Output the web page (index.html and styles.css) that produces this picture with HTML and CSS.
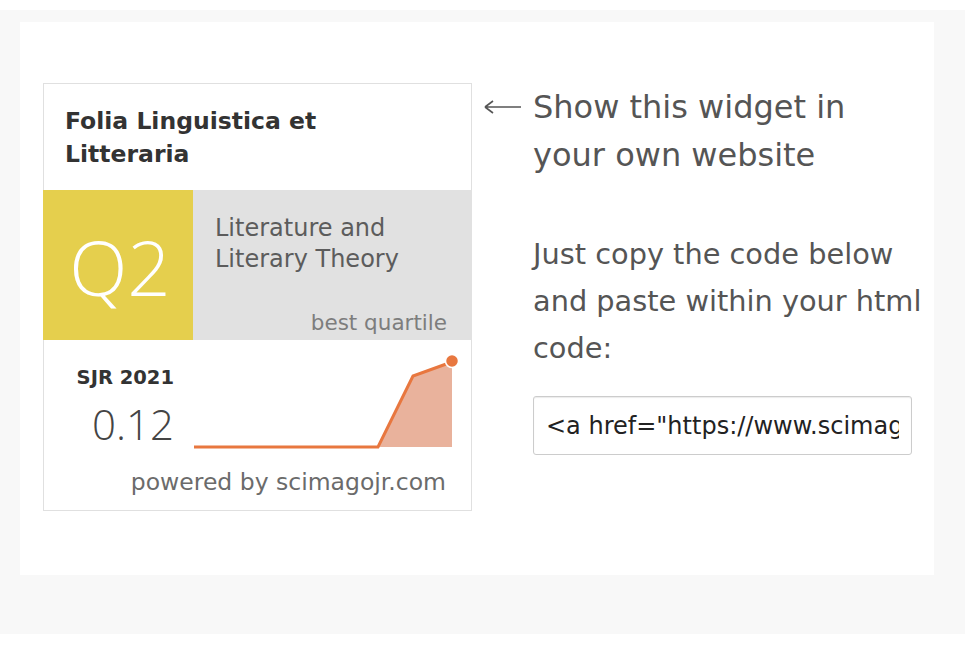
FILE: index.html
```html
<!DOCTYPE html>
<html lang="en">
<head>
  <meta charset="UTF-8">
  <title>SJR Widget</title>
  <link rel="stylesheet" href="styles.css">
</head>
<body>
  <div class="band">
    <div class="panel">
      <!-- the widget -->
      <div class="widget">
        <div class="widget-title">Folia Linguistica et Litteraria</div>
        <div class="quartile">
          <div class="q-box">Q2</div>
          <div class="q-info">
            <div class="q-cat">Literature and Literary Theory</div>
            <div class="q-note">best quartile</div>
          </div>
        </div>
        <div class="sjr">
          <div class="sjr-row">
            <div class="sjr-value">
              <div class="sjr-label">SJR 2021</div>
              <div class="sjr-num">0.12</div>
            </div>
            <svg class="sjr-chart" width="270" height="100" viewBox="0 0 270 100">
              <polygon points="184,97 219,26 255,13 258,11 258,97" fill="#e9b29c"/>
              <polyline points="0,97 184,97 219,26 255,13" fill="none" stroke="#e8773f" stroke-width="3"/>
              <circle cx="258" cy="11" r="6.5" fill="#e8773f" stroke="#fff" stroke-width="1.5"/>
            </svg>
          </div>
          <div class="powered">powered by scimagojr.com</div>
        </div>
      </div>

      <!-- instructions -->
      <div class="info">
        <div class="info-head">
          <svg class="arrow" width="49" height="48" viewBox="0 0 49 48">
            <path d="M1 24 H37 M1 24 L9 18 M1 24 L9 30" fill="none" stroke="#555" stroke-width="1.6"/>
          </svg>
          <h2>Show this widget in your own website</h2>
        </div>
        <p>Just copy the code below and paste within your html code:</p>
        <input class="code" type="text" value='&lt;a href="https://www.scimagojr.com/journalsearch.php?q=21100863116&amp;tip=sid&amp;exact=no" title="SCImago Journal &amp;amp; Country Rank"&gt;' readonly>
      </div>
    </div>
  </div>
</body>
</html>
```

FILE: styles.css
```css
/* Page */
body {
  margin: 0;
  background: #ffffff;
  font-family: "DejaVu Sans", sans-serif;
}

.band {
  margin-top: 10px;
  width: 965px;
  height: 624px;
  padding: 12px 0 0 20px;
  box-sizing: border-box;
  background: #f8f8f8;
}

.panel {
  width: 914px;
  height: 553px;
  background: #ffffff;
  display: flex;
  padding: 61px 0 0 23px;
  box-sizing: border-box;
}

/* Widget */
.widget {
  width: 429px;
  height: 428px;
  border: 1px solid #e0e0e0;
  box-sizing: border-box;
  display: flex;
  flex-direction: column;
}

.widget-title {
  height: 106px;
  padding: 21px 120px 0 21px;
  box-sizing: border-box;
  font-size: 23.5px;
  font-weight: 700;
  line-height: 33px;
  color: #333333;
}

.quartile {
  display: flex;
  height: 150px;
  margin: 0 -1px;
}

.q-box {
  width: 150px;
  background: #e5cf4d;
  color: #ffffff;
  font-family: "Open Sans", sans-serif;
  font-weight: 300;
  font-size: 76px;
  display: flex;
  align-items: center;
  justify-content: center;
  padding: 2px 0 0 4px;
  box-sizing: border-box;
}

.q-info {
  flex: 1;
  background: #e1e1e1;
  display: flex;
  flex-direction: column;
  justify-content: space-between;
  padding: 23px 25px 5px 22px;
}

.q-cat {
  font-size: 24px;
  line-height: 31px;
  color: #5c5c5c;
}

.q-note {
  text-align: right;
  font-size: 21.5px;
  line-height: 25px;
  color: #7d7d7d;
}

.sjr {
  flex: 1;
  display: flex;
  flex-direction: column;
}

.sjr-row {
  display: flex;
  padding-top: 10px;
}

.sjr-value {
  width: 150px;
  padding: 16px 20px 0 0;
  box-sizing: border-box;
  text-align: right;
}

.sjr-label {
  font-size: 19.5px;
  font-weight: 700;
  color: #333333;
  line-height: 24px;
}

.sjr-num {
  margin-top: 9px;
  font-family: "Open Sans", sans-serif;
  font-weight: 300;
  font-size: 42px;
  line-height: 50px;
  color: #444444;
}

.sjr-chart {
  display: block;
}

.powered {
  text-align: right;
  padding: 18px 25px 0 0;
  font-size: 23.5px;
  line-height: 28px;
  color: #6b6b6b;
}

/* Instructions */
.info {
  margin-left: 12px;
  color: #555555;
}

.info-head {
  display: flex;
  align-items: flex-start;
}

.arrow {
  display: block;
  flex: none;
}

.info h2 {
  margin: 0;
  font-size: 32px;
  font-weight: 400;
  line-height: 48px;
  width: 365px;
}

.info p {
  margin: 52px 0 0 49px;
  font-size: 28.8px;
  line-height: 47px;
  width: 396px;
}

.code {
  display: block;
  margin: 24px 0 0 49px;
  width: 379px;
  height: 59px;
  padding: 0 12px;
  box-sizing: border-box;
  border: 1px solid #cccccc;
  border-radius: 3px;
  box-shadow: inset 0 1px 1px rgba(0, 0, 0, 0.08);
  font-family: "DejaVu Sans", sans-serif;
  font-size: 24px;
  color: #222222;
  background: #ffffff;
}
```
